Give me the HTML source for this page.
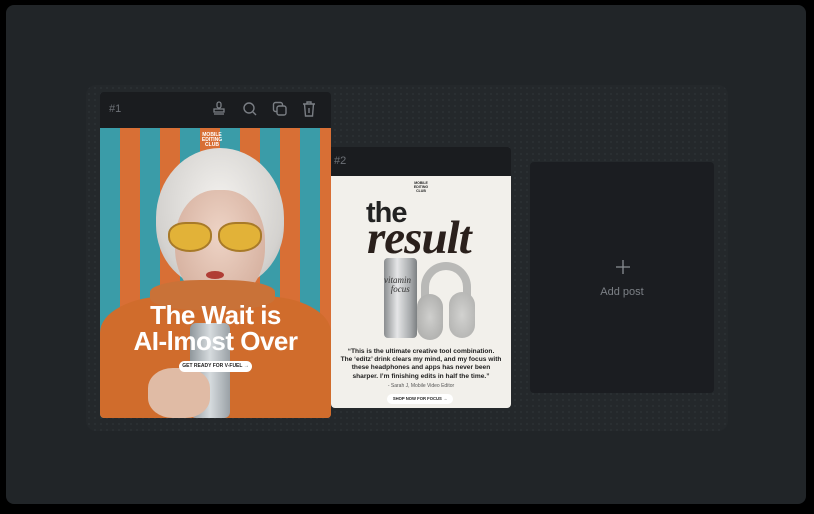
<!DOCTYPE html>
<html><head><meta charset="utf-8"><style>
*{margin:0;padding:0;box-sizing:border-box}
html,body{width:814px;height:514px;background:#000;overflow:hidden;font-family:"Liberation Sans",sans-serif}
.frame{position:absolute;left:6px;top:5px;width:800px;height:499px;background:#212528;border-radius:8px}
.dots{position:absolute;left:86px;top:85px;width:642px;height:346px;border-radius:10px;background-color:#24282b;background-image:radial-gradient(circle,#2c3135 0.8px,transparent 1px);background-size:6px 6px}
.abs{position:absolute}
.hdr{background:#1a1c1f;color:#6d7177;font-size:11px}
.img1{left:100px;top:128px;width:231px;height:290px;overflow:hidden;border-radius:0 0 4px 4px;background:repeating-linear-gradient(90deg,#3a9ca8 0 20px,#d86f35 20px 40px)}
.img2{left:331px;top:176px;width:180px;height:232px;background:#f2f0eb;border-radius:0 0 4px 4px;overflow:hidden}
</style></head><body>
<div class="frame"></div>
<div class="dots"></div>

<div class="abs hdr" style="left:100px;top:92px;width:231px;height:36px;border-radius:4px 4px 0 0">
<span class="abs" style="left:9px;top:11px">#1</span>
</div>
<svg style="position:absolute;left:212px;top:101px" width="14" height="16" viewBox="0 0 14 16" fill="none" stroke="#7a7e84" stroke-width="1.3"><rect x="5" y="1" width="4" height="6" rx="2"/><rect x="2" y="8" width="10" height="3"/><path d="M2 13h10"/></svg>
<svg style="position:absolute;left:242px;top:101px" width="16" height="16" viewBox="0 0 16 16" fill="none" stroke="#7a7e84" stroke-width="1.4"><circle cx="7" cy="7" r="5"/><path d="M11 11l3 3"/></svg>
<svg style="position:absolute;left:272px;top:101px" width="16" height="16" viewBox="0 0 16 16" fill="none" stroke="#7a7e84" stroke-width="1.4"><rect x="1.5" y="1.5" width="9" height="9" rx="2"/><rect x="5" y="5" width="9" height="9" rx="2" fill="#1a1c1f"/></svg>
<svg style="position:absolute;left:302px;top:101px" width="14" height="16" viewBox="0 0 14 16" fill="none" stroke="#7a7e84" stroke-width="1.4"><path d="M1 3h12M5 3V1h4v2M2.5 3l1 12h7l1-12M7 7v5"/></svg>

<div class="abs img1">
 <div class="abs" style="left:72px;top:5px;color:#fff;font-size:5px;font-weight:bold;line-height:5px;text-align:center;width:80px">MOBILE<br>EDITING<br>CLUB</div>
 <div class="abs" style="left:56px;top:20px;width:128px;height:140px;border-radius:50% 50% 45% 45%;background:radial-gradient(ellipse at 50% 40%,#f3f1ee,#d4d2cf 70%,#b0aeab)"></div>
 <div class="abs" style="left:75px;top:62px;width:90px;height:112px;border-radius:45% 45% 48% 48%;background:radial-gradient(ellipse at 50% 40%,#eed4c6,#d0a896)"></div>
 <div class="abs" style="left:68px;top:94px;width:44px;height:30px;border-radius:40% 40% 50% 50%;background:#e2b238;border:2px solid #a87a28"></div>
 <div class="abs" style="left:118px;top:94px;width:44px;height:30px;border-radius:40% 40% 50% 50%;background:#e2b238;border:2px solid #a87a28"></div>
 <div class="abs" style="left:106px;top:143px;width:18px;height:8px;border-radius:50%;background:#b03d35"></div>
 <div class="abs" style="left:0;top:168px;width:231px;height:122px;background:#d06c2c;border-radius:30% 30% 0 0"></div>
 <div class="abs" style="left:50px;top:152px;width:125px;height:30px;background:#c97238;border-radius:40%"></div>
 <div class="abs" style="left:90px;top:195px;width:40px;height:95px;border-radius:6px;background:linear-gradient(90deg,#8f979c,#d6dbde,#9aa1a6)"></div>
 <div class="abs" style="left:48px;top:240px;width:62px;height:50px;border-radius:40%;background:#e0bba5"></div>
 <div class="abs" style="left:0;top:174px;width:231px;text-align:center;color:#fff;font-weight:bold;font-size:26px;line-height:26px;letter-spacing:-0.5px">The Wait is<br>AI-lmost Over</div>
 <div class="abs" style="left:79px;top:233px;width:73px;height:11px;border-radius:6px;background:#fff;font-size:5px;font-weight:bold;line-height:11px;text-align:center;color:#222">GET READY FOR V-FUEL →</div>
</div>

<div class="abs hdr" style="left:331px;top:147px;width:180px;height:29px;border-radius:0 4px 0 0">
<span class="abs" style="left:3px;top:8px">#2</span></div>
<div class="abs img2">
 <div class="abs" style="left:70px;top:5px;width:40px;font-size:3.5px;font-weight:bold;line-height:4px;text-align:center;color:#222">MOBILE<br>EDITING<br>CLUB</div>
 <div class="abs" style="left:35px;top:21px;font-size:29px;font-weight:bold;color:#222;letter-spacing:-1px">the</div>
 <div class="abs" style="left:36px;top:35px;font-family:'Liberation Serif',serif;font-style:italic;font-weight:bold;font-size:47px;color:#2a201c;letter-spacing:-1px">result</div>
 <div class="abs" style="left:53px;top:82px;width:33px;height:80px;border-radius:4px;background:linear-gradient(90deg,#8a8d8f,#e5e6e7 40%,#a7aaac 80%,#7d8082)"></div>
 <div class="abs" style="left:53px;top:100px;font-size:9px;color:#333;font-family:'Liberation Serif',serif;font-style:italic;line-height:9px">vitamin<br>&nbsp;&nbsp;&nbsp;focus</div>
 <div class="abs" style="left:90px;top:86px;width:50px;height:52px;border:8px solid #b9b9b7;border-bottom:none;border-radius:25px 25px 0 0"></div>
 <div class="abs" style="left:86px;top:118px;width:26px;height:46px;border-radius:13px;background:radial-gradient(#cfcfcd,#a8a8a6)"></div>
 <div class="abs" style="left:118px;top:116px;width:26px;height:46px;border-radius:13px;background:radial-gradient(#d2d2d0,#aeaeac)"></div>
 <div class="abs" style="left:0;top:172px;width:180px;text-align:center;font-size:6.6px;font-weight:bold;line-height:8.2px;color:#1e1e1e">“This is the ultimate creative tool combination.<br>The ‘editz’ drink clears my mind, and my focus with<br>these headphones and apps has never been<br>sharper. I’m finishing edits in half the time.”</div>
 <div class="abs" style="left:0;top:207px;width:180px;text-align:center;font-size:5px;color:#555">- Sarah J, Mobile Video Editor</div>
 <div class="abs" style="left:56px;top:218px;width:66px;height:10px;border-radius:5px;background:#fff;font-size:4.2px;font-weight:bold;line-height:10px;text-align:center;color:#222">SHOP NOW FOR FOCUS →</div>
</div>

<div class="abs" style="left:530px;top:162px;width:184px;height:231px;background:#1b1d21;border-radius:4px"></div>
<svg class="abs" style="left:615px;top:259px" width="16" height="16" viewBox="0 0 16 16" stroke="#8a8e93" stroke-width="1.3"><path d="M8 1v14M1 8h14"/></svg>
<div class="abs" style="left:530px;top:286px;width:184px;text-align:center;color:#7c8086;font-size:11px">Add post</div>
</body></html>
